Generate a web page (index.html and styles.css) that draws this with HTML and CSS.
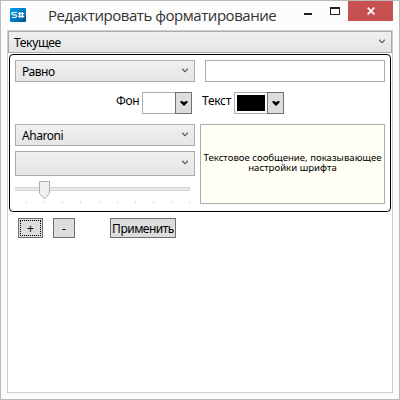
FILE: index.html
```html
<!DOCTYPE html>
<html lang="ru">
<head>
<meta charset="utf-8">
<title>Редактировать форматирование</title>
<link rel="stylesheet" href="styles.css">
</head>
<body>
<div class="window">
  <header class="titlebar">
    <svg class="logo" width="16" height="14" viewBox="0 0 16 14">
      <defs><linearGradient id="blue" x1="0" y1="0" x2="1" y2="1"><stop offset="0" stop-color="#00a5e6"/><stop offset="1" stop-color="#00509c"/></linearGradient></defs>
      <rect width="16" height="14" rx="1" fill="url(#blue)"/>
      <path d="M7 4.5H3Q2 4.5 2 5.5T3 6.8H5.5Q6.5 6.8 6.5 8T5.5 9.5H2M9.8 4V10M12.4 4V10M8 5.6H14.2M8 8.4H14.2" fill="none" stroke="#fff" stroke-width="1.2"/>
    </svg>
    <h1 class="title"><span>Редактировать форматирование</span></h1>
    <div class="controls">
      <span class="minimize"></span>
      <span class="maximize"></span>
      <span class="close"><svg width="8" height="8" viewBox="0 0 8 8"><path d="M.7 .7L7.3 7.3M7.3 .7L.7 7.3" stroke="#fff" stroke-width="1.7"/></svg></span>
    </div>
  </header>
  <main class="client">
    <div class="combo combo-main"><span>Текущее</span><svg class="chevron" width="6" height="5" viewBox="0 0 6 5"><path d="M.7 .5V1.5L3 3.7L5.3 1.5V.5" /></svg></div>
    <section class="panel">
      <div class="row condition">
        <div class="combo"><span>Равно</span><svg class="chevron" width="6" height="5" viewBox="0 0 6 5"><path d="M.7 .5V1.5L3 3.7L5.3 1.5V.5" /></svg></div>
        <div class="input"></div>
      </div>
      <div class="row colors">
        <span class="label label-back">Фон</span>
        <div class="picker"><span class="swatch"></span><span class="drop"><svg width="8" height="5" viewBox="0 0 8 5"><path d="M.5 0H2L4 1.2L6 0H7.5V1.5L4 5L.5 1.5Z"/></svg></span></div>
        <span class="label label-text">Текст</span>
        <div class="picker"><span class="swatch black"></span><span class="drop"><svg width="8" height="5" viewBox="0 0 8 5"><path d="M.5 0H2L4 1.2L6 0H7.5V1.5L4 5L.5 1.5Z"/></svg></span></div>
      </div>
      <div class="row font">
        <div class="font-options">
          <div class="combo"><span>Aharoni</span><svg class="chevron" width="6" height="5" viewBox="0 0 6 5"><path d="M.7 .5V1.5L3 3.7L5.3 1.5V.5" /></svg></div>
          <div class="combo tall"><span></span><svg class="chevron" width="6" height="5" viewBox="0 0 6 5"><path d="M.7 .5V1.5L3 3.7L5.3 1.5V.5" /></svg></div>
          <svg class="slider" width="180" height="24" viewBox="0 0 180 24">
            <rect x="-1" y="6.5" width="175.5" height="3" fill="#e7eaea" stroke="#d6d6d6"/>
            <path d="M24.5 .5H34.5V12.5L29.5 18L24.5 12.5Z" fill="#f0f0f0" stroke="#acacac"/>
            <path d="M11.5 20v3M29.5 20v3M47.5 20v3M65.5 20v3M84.5 20v3M102.5 20v3M120.5 20v3M138.5 20v3M156.5 20v3M174.5 20v3" stroke="#e2e4e4"/>
          </svg>
        </div>
        <div class="preview"><p class="message">Текстовое сообщение, показывающее настройки шрифта</p></div>
      </div>
    </section>
    <div class="actions">
      <button class="add">+</button>
      <button class="remove">-</button>
      <button class="apply">Применить</button>
    </div>
  </main>
</div>
</body>
</html>
```
FILE: styles.css
```css
* { box-sizing: border-box; }

body {
  margin: 0;
  font: 12px/16px "Noto Sans", "Open Sans", sans-serif;
  color: #000;
}

.window {
  width: 400px;
  height: 400px;
  padding: 0 6px 6px;
  border: 1px solid #bababa;
  background: #fcfcfc;
  display: flex;
  flex-direction: column;
}

.titlebar { height: 29px; display: flex; flex: none; }
.logo { margin: 7px 0 0 3px; flex: none; }
.title {
  margin: 3px 0 0 22px;
  width: 245px;
  font: 400 15px/22px "Open Sans", sans-serif;
  letter-spacing: -0.46px;
  color: #333;
  white-space: nowrap;
}
.controls { display: flex; margin-left: 11px; flex: none; }
.minimize { width: 8px; height: 2px; margin-top: 12px; background: #222; }
.maximize { width: 10px; height: 8px; margin: 6px 8px 0 18px; border: 1px solid #222; border-top-width: 2px; }
.close {
  width: 45px;
  height: 20px;
  background: #c75050;
  display: flex;
  align-items: center;
  justify-content: center;
}

.client { flex: 1; border: 1px solid #cfcfcf; background: #fff; }

.combo {
  width: 180px;
  height: 22px;
  padding: 0 6px;
  border: 1px solid #acacac;
  background: linear-gradient(#f0f0f0, #e5e5e5);
  letter-spacing: -0.45px;
  display: flex;
  align-items: center;
  justify-content: space-between;
}
.combo-main { width: 384px; padding-left: 5px; letter-spacing: -0.35px; }
.combo span { padding-top: 1px; }
.tall { height: 25px; margin-top: 5px; }
.chevron { margin-bottom: 2px; fill: none; stroke: #606060; stroke-width: 1.3; }

.panel {
  width: 382px;
  height: 158px;
  margin: 1px 0 0 1px;
  padding: 5px;
  border: 1px solid #000;
  border-radius: 4px;
}
.row { display: flex; }
.condition { gap: 10px; }
.input { width: 180px; height: 22px; border: 1px solid #abadb3; }
.colors { height: 22px; margin-top: 10px; }
.label { line-height: 17px; letter-spacing: -0.3px; white-space: nowrap; }
.label-back { width: 26px; margin-left: 101px; }
.label-text { width: 32px; margin-left: 10px; }
.picker { width: 50px; height: 22px; border: 1px solid #abadb3; border-right: 0; display: flex; }
.swatch { width: 28px; height: 16px; margin: 2px; }
.black { background: #000; }
.drop {
  width: 17px;
  height: 22px;
  margin-top: -1px;
  border: 1px solid #707070;
  background: #ddd;
  display: flex;
  align-items: center;
  justify-content: center;
}

.font { gap: 5px; margin-top: 10px; }
.font-options { width: 180px; }
.slider { display: block; margin-top: 5px; }
.preview {
  width: 185px;
  height: 80px;
  padding-bottom: 2px;
  border: 1px solid #abadb3;
  background: #fffff5;
  font-size: 9.6px;
  line-height: 10px;
  display: flex;
  align-items: center;
  justify-content: center;
}
.message { margin: 0; width: 183px; text-align: center; }

.actions { display: flex; margin: 6px 0 0 10px; }
.actions button {
  height: 20px;
  padding: 2px 0 0;
  border: 1px solid #707070;
  background: #ddd;
  color: #000;
  font: 12px/16px "Noto Sans", "Open Sans", sans-serif;
  white-space: nowrap;
}
.actions .add { width: 25px; outline: 1px dotted #000; outline-offset: -3px; }
.actions .remove { width: 22px; margin-left: 10px; }
.actions .apply { width: 66px; margin-left: 35px; letter-spacing: -0.5px; }
```
